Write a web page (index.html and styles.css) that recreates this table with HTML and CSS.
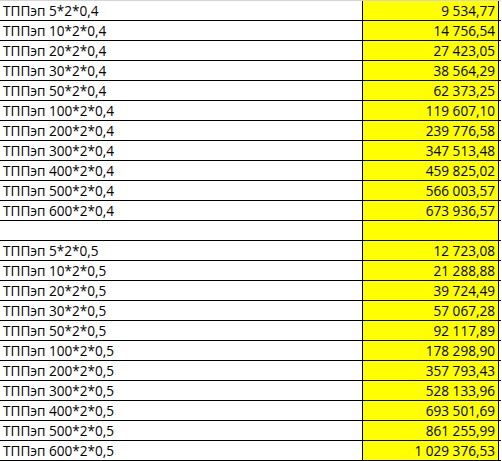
FILE: index.html
```html
<!DOCTYPE html>
<html lang="ru">
<head>
<meta charset="utf-8">
<link rel="stylesheet" href="styles.css">
</head>
<body>
<div class="sheet">
  <div class="row"><div class="name">ТППэп 5*2*0,4</div><div class="price">9 534,77</div></div>
  <div class="row"><div class="name">ТППэп 10*2*0,4</div><div class="price">14 756,54</div></div>
  <div class="row"><div class="name">ТППэп 20*2*0,4</div><div class="price">27 423,05</div></div>
  <div class="row"><div class="name">ТППэп 30*2*0,4</div><div class="price">38 564,29</div></div>
  <div class="row"><div class="name">ТППэп 50*2*0,4</div><div class="price">62 373,25</div></div>
  <div class="row"><div class="name">ТППэп 100*2*0,4</div><div class="price">119 607,10</div></div>
  <div class="row"><div class="name">ТППэп 200*2*0,4</div><div class="price">239 776,58</div></div>
  <div class="row"><div class="name">ТППэп 300*2*0,4</div><div class="price">347 513,48</div></div>
  <div class="row"><div class="name">ТППэп 400*2*0,4</div><div class="price">459 825,02</div></div>
  <div class="row"><div class="name">ТППэп 500*2*0,4</div><div class="price">566 003,57</div></div>
  <div class="row"><div class="name">ТППэп 600*2*0,4</div><div class="price">673 936,57</div></div>
  <div class="row"><div class="name"></div><div class="price"></div></div>
  <div class="row"><div class="name">ТППэп 5*2*0,5</div><div class="price">12 723,08</div></div>
  <div class="row"><div class="name">ТППэп 10*2*0,5</div><div class="price">21 288,88</div></div>
  <div class="row"><div class="name">ТППэп 20*2*0,5</div><div class="price">39 724,49</div></div>
  <div class="row"><div class="name">ТППэп 30*2*0,5</div><div class="price">57 067,28</div></div>
  <div class="row"><div class="name">ТППэп 50*2*0,5</div><div class="price">92 117,89</div></div>
  <div class="row"><div class="name">ТППэп 100*2*0,5</div><div class="price">178 298,90</div></div>
  <div class="row"><div class="name">ТППэп 200*2*0,5</div><div class="price">357 793,43</div></div>
  <div class="row"><div class="name">ТППэп 300*2*0,5</div><div class="price">528 133,96</div></div>
  <div class="row"><div class="name">ТППэп 400*2*0,5</div><div class="price">693 501,69</div></div>
  <div class="row"><div class="name">ТППэп 500*2*0,5</div><div class="price">861 255,99</div></div>
  <div class="row"><div class="name">ТППэп 600*2*0,5</div><div class="price">1 029 376,53</div></div>
</div>
</body>
</html>
```
FILE: styles.css
```css
html, body {
  margin: 0;
  padding: 0;
  background: #ffffff;
}
.sheet {
  width: 501px;
  border-top: 1px solid #d4d4d4;
  font-family: "Open Sans", "Liberation Sans", sans-serif;
  font-size: 13.6px;
  color: #000;
}
.row {
  display: grid;
  grid-template-columns: 363px 136px;
  height: 19px;
  border-bottom: 1px solid #000;
}
.name {
  padding-left: 3px;
  height: 19px;
  line-height: 19px;
  overflow: hidden;
  white-space: nowrap;
  border-right: 1px solid #000;
}
.price {
  background: #ffff00;
  text-align: right;
  padding-right: 3px;
  height: 19px;
  line-height: 19px;
  overflow: hidden;
  white-space: nowrap;
  border-right: 1px solid #000;
}
```
